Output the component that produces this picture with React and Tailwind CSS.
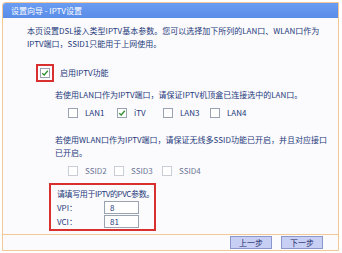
import React from 'react';

const font = { fontFamily: '"SimSun", "Noto Sans CJK SC", "Liberation Sans", sans-serif' };

function Box({ checked, disabled, className = '' }) {
  return (
    <span className={`inline-flex w-[10px] h-[10px] border ${disabled ? 'border-[#c9cdd6]' : 'border-[#9aa3b0]'} bg-white items-center justify-center ${className}`}>
      {checked && (
        <svg viewBox="0 0 10 10" className="w-[8px] h-[8px]">
          <path d="M1.5 5.2 L4 7.5 L8.5 2.2" fill="none" stroke="#2f8f2f" strokeWidth="1.6" />
        </svg>
      )}
    </span>
  );
}

function Option({ label, checked, disabled, width }) {
  return (
    <div className={`flex items-center ${width}`}>
      <Box checked={checked} disabled={disabled} />
      <span className={`ml-[7px] ${disabled ? 'text-[#6c7595]' : ''}`}>{label}</span>
    </div>
  );
}

export default function App() {
  return (
    <div className="w-[342px] h-[253px] bg-white pt-[2px] pl-[2px] pr-[3px] pb-[2px] text-[8px] text-[#25397a]" style={font}>
      <div className="h-full flex flex-col border border-[#f2c896] rounded-tl-[3px]">
        {/* header bar */}
        <div className="h-[15px] shrink-0 bg-gradient-to-b from-[#6a9cf2] to-[#5a8de8] text-white flex items-center pl-[8px] text-[8px] rounded-tl-[3px]">
          设置向导 - IPTV设置
        </div>

        {/* body */}
        <div className="flex-1 min-h-0 overflow-hidden bg-[#fbfbfd] pl-[24px] pr-[10px] pt-[6px]">
          <p className="leading-[13px]">
            本页设置DSL接入类型IPTV基本参数。您可以选择加下所列的LAN口、WLAN口作为
            <br />
            IPTV端口，SSID1只能用于上网使用。
          </p>

          <div className="mt-[14px] ml-[9px] flex items-center">
            <span className="border-2 border-[#d8302f] p-[2px] flex">
              <Box checked />
            </span>
            <span className="ml-[6px]">启用IPTV功能</span>
          </div>

          <div className="ml-[28px] mt-[6px]">
            <p className="leading-[13px]">若使用LAN口作为IPTV端口，请保证IPTV机顶盒已连接选中的LAN口。</p>
            <div className="flex mt-[6px] ml-[13px]">
              <Option label="LAN1" width="w-[49px]" />
              <Option label="iTV" checked width="w-[46px]" />
              <Option label="LAN3" width="w-[47px]" />
              <Option label="LAN4" width="w-[47px]" />
            </div>
            <p className="leading-[13px] mt-[14px]">
              若使用WLAN口作为IPTV端口，请保证无线多SSID功能已开启，并且对应接口
              <br />
              已开启。
            </p>
            <div className="flex mt-[6px] ml-[13px]">
              <Option label="SSID2" disabled width="w-[46px]" />
              <Option label="SSID3" disabled width="w-[48px]" />
              <Option label="SSID4" disabled width="w-[48px]" />
            </div>
          </div>

          <div className="mt-[6px] ml-[22px] w-[107px] h-[48px] border-2 border-[#d8302f] pl-[6px] pt-[3px]">
            <p className="leading-[12px] whitespace-nowrap tracking-[-0.4px]">请填写用于IPTV的PVC参数。</p>
            <div className="flex items-center mt-[1px]">
              <span className="w-[47px]">VPI：</span>
              <span className="w-[35px] h-[13px] border border-[#9aa3b0] bg-white pl-[5px] leading-[11px]">8</span>
            </div>
            <div className="flex items-center mt-[1px]">
              <span className="w-[47px]">VCI：</span>
              <span className="w-[35px] h-[13px] border border-[#9aa3b0] bg-white pl-[5px] leading-[11px]">81</span>
            </div>
          </div>
        </div>

        {/* bottom buttons */}
        <div className="h-[16px] shrink-0 border-t border-[#f2c896] bg-[#fbfbfd] flex items-center justify-end pr-[15px] gap-[9px]">
          <button className="w-[42px] h-[13px] bg-[#c8cff4] border border-[#8a96cc] text-[#1d2a6a] text-[8px] leading-[11px]">上一步</button>
          <button className="w-[42px] h-[13px] bg-[#c8cff4] border border-[#8a96cc] text-[#1d2a6a] text-[8px] leading-[11px]">下一步</button>
        </div>
      </div>
    </div>
  );
}
